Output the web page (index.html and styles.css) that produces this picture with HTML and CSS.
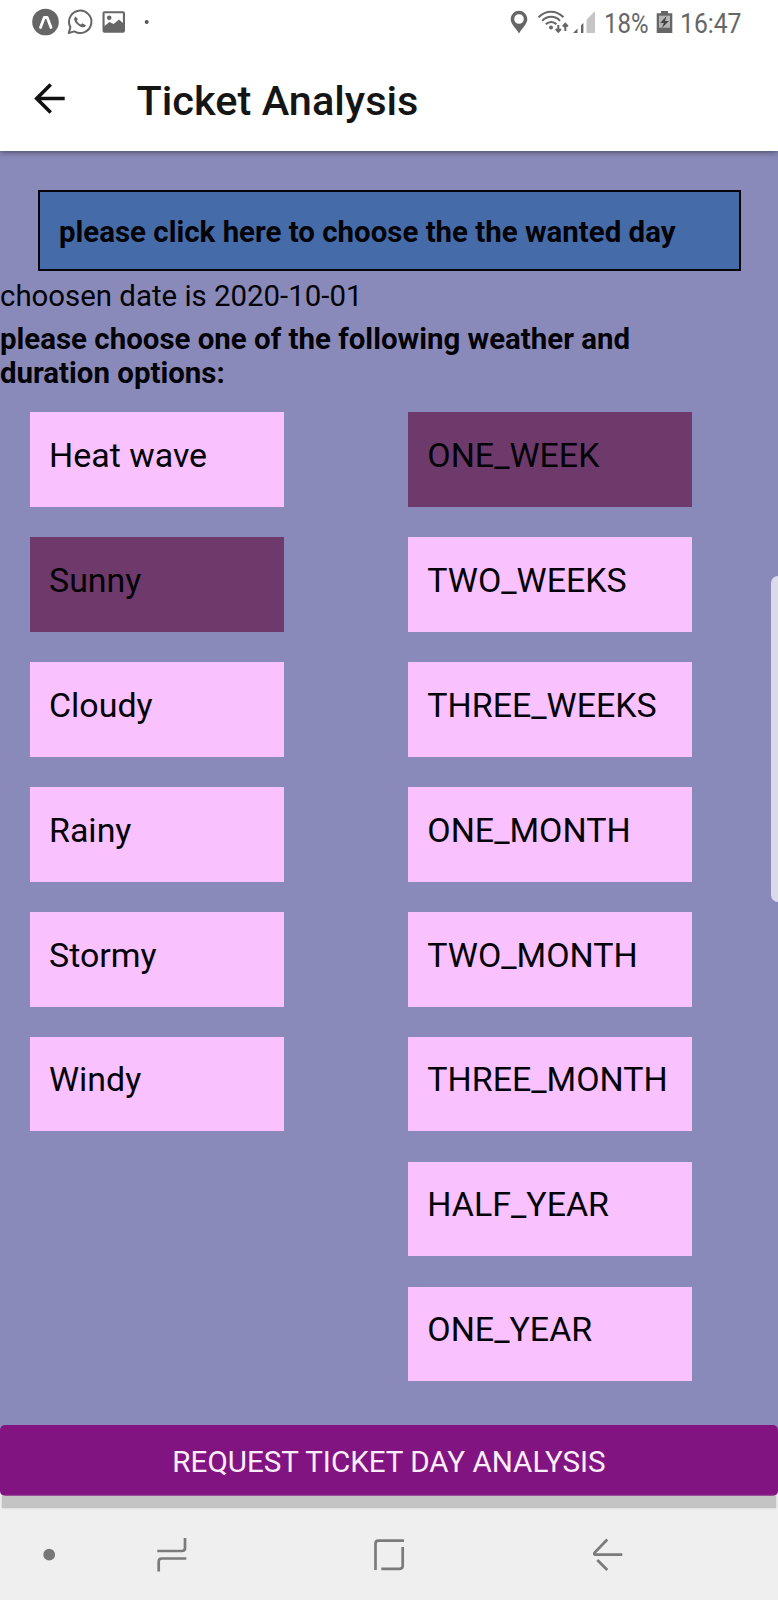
FILE: index.html
```
<!DOCTYPE html>
<html lang="en">
<head>
<meta charset="utf-8">
<title>Ticket Analysis</title>
<link rel="stylesheet" href="styles.css">
</head>
<body>
<div class="phone">
  <header class="header">
    <div class="status">
      <svg class="status-left" width="160" height="48" viewBox="0 0 160 48">
        <circle cx="45.500" cy="22" r="13.300" fill="#666"/>
        <path d="M40.500 27.500L44.300 17.500H47.200L51 27.500" fill="none" stroke="#fff" stroke-width="2.800" stroke-linejoin="round" stroke-linecap="round"/>
        <path d="M68.700 33L70.400 27.200A11.200 11.200 0 1 1 74.400 31.400Z" fill="none" stroke="#666" stroke-width="2" stroke-linejoin="round"/>
        <path d="M75.500 16.500c-3 2.500-.5 6 2.500 8.500s6.500 3.500 8 .5l-3.500-2.300-1.700 1.400c-1.800-.8-3.200-2.200-4-4l1.200-1.500z" fill="#666"/>
        <path d="M104.500 11.200h18.500a2 2 0 0 1 2 2v17.500a2 2 0 0 1-2 2h-18.500a2 2 0 0 1-2-2v-17.500a2 2 0 0 1 2-2z" fill="#666"/>
        <path d="M104.600 13.200h18.300V23l-4-3.500-5.200 4.500-4.300-2-4.800 4z" fill="#fff"/>
        <circle cx="109.200" cy="17.800" r="2.300" fill="#666"/>
        <circle cx="146.700" cy="22" r="2" fill="#555"/>
      </svg>
      <svg class="status-right" width="288" height="48" viewBox="490 0 288 48">
        <path fill-rule="evenodd" d="M519 10.800a8.300 8.300 0 0 0-8.300 8.300c0 5.500 5.300 9.200 8.300 14.300 3-5.100 8.300-8.800 8.300-14.300a8.300 8.300 0 0 0-8.300-8.300zm0 3.400a4.800 4.800 0 1 1 0 9.600 4.800 4.800 0 0 1 0-9.600z" fill="#666"/>
        <g fill="none" stroke="#666" stroke-width="2">
          <path d="M538.500 17.200C546 10 556 10 563.500 17.200M542.200 20.700C547.500 15.500 555 15.500 560 20.700M545.800 24.300C549 21.200 553.500 21.200 556.500 24.300"/>
          <path d="M558.300 25v6.500M555.800 29l2.500 2.800 2.500-2.800M565.300 31v-7M562.800 26.500l2.500-2.800 2.500 2.800"/>
        </g>
        <circle cx="551" cy="27.500" r="2" fill="#666"/>
        <path d="M573 33l4.500-4.500V33zM581 25.300l2.400-2.400V33H581z" fill="#666"/>
        <path d="M586.500 19.800L595 11v22h-8.500z" fill="#c5c5c5"/>
        <text class="status-text" x="604" y="32.700" textLength="44.500" lengthAdjust="spacingAndGlyphs">18%</text>
        <path d="M661 11h7v2.300h4.300V33h-15.600V13.300h4.300z" fill="#666"/>
        <path d="M659 15.700h11v12h-11z" fill="#b5b5b5"/>
        <path d="M666.500 16l-6.300 7h3.600l-1.800 5 6.800-7h-3.800z" fill="#444"/>
        <text class="status-text" x="680" y="32.700" textLength="61.500" lengthAdjust="spacingAndGlyphs">16:47</text>
      </svg>
    </div>
    <div class="appbar">
      <svg class="back" width="32" height="32" viewBox="0 0 32 32"><path d="M30.700 16.500H3M16.700 2.500L2.700 16.500l14 14" fill="none" stroke="#111" stroke-width="3.600"/></svg>
      <h1 class="title">Ticket Analysis</h1>
    </div>
  </header>
  <main class="content">
    <div class="date-button">please click here to choose the the wanted day</div>
    <p class="chosen">choosen date is 2020-10-01</p>
    <p class="prompt">please choose one of the following weather and<br>duration options:</p>
    <div class="options">
      <div class="column weather">
        <div class="option">Heat wave</div>
        <div class="option selected">Sunny</div>
        <div class="option">Cloudy</div>
        <div class="option">Rainy</div>
        <div class="option">Stormy</div>
        <div class="option">Windy</div>
      </div>
      <div class="column duration">
        <div class="option selected">ONE_WEEK</div>
        <div class="option">TWO_WEEKS</div>
        <div class="option">THREE_WEEKS</div>
        <div class="option">ONE_MONTH</div>
        <div class="option">TWO_MONTH</div>
        <div class="option">THREE_MONTH</div>
        <div class="option">HALF_YEAR</div>
        <div class="option">ONE_YEAR</div>
      </div>
    </div>
    <div class="scrollbar"></div>
  </main>
  <footer class="footer">
    <div class="request">REQUEST TICKET DAY ANALYSIS</div>
    <div class="button-shadow"></div>
    <svg class="nav" width="778" height="92" viewBox="0 1508 778 92">
      <circle cx="49.200" cy="1554.700" r="5.900" fill="#777"/>
      <g fill="none" stroke="#7b7b7b" stroke-width="2.700">
        <path d="M157.300 1551H182Q185 1551 185 1548V1538M186.300 1558.500H161.700Q158.700 1558.500 158.700 1561.500V1571.500"/>
        <path d="M375.500 1570V1543.700Q375.500 1540.700 378.500 1540.700H404M402.700 1547V1565.800Q402.700 1568.800 399.700 1568.800H381.300"/>
        <path d="M607.300 1539.500L594.500 1552.800Q593.500 1554.700 595.500 1554.700H622.300M597.300 1560L607.300 1570"/>
      </g>
    </svg>
  </footer>
</div>
</body>
</html>
```
FILE: styles.css
```
* { box-sizing: border-box; }
body { margin: 0; font-family: Roboto, sans-serif; color: #030308; }
p, h1 { margin: 0; }
svg { display: block; }
.phone { width: 778px; height: 1600px; display: flex; flex-direction: column; overflow: hidden; background: #efefef; }
.header { height: 151px; background: #fff; position: relative; z-index: 1; box-shadow: 0 1px 6px rgba(0, 0, 0, .5); }
.status { display: flex; justify-content: space-between; height: 48px; }
.status-text { font: 28px Roboto, sans-serif; fill: #666; }
.appbar { display: flex; align-items: center; height: 103px; padding: 0 0 0 34px; }
.back { margin-top: -3px; }
.title { margin-left: 70.500px; margin-top: 3px; font-size: 41.500px; font-weight: 500; line-height: 50px; color: #151515; white-space: nowrap; }
.content { height: 1274px; background: #8a8aba; padding-top: 38.500px; position: relative; }
.date-button { margin: 0 37.500px 0 38px; height: 81px; border: 2px solid #05050c; background: #466ba9; padding: 23.500px 19px; font-size: 29.450px; line-height: 34.500px; font-weight: 700; white-space: nowrap; }
.chosen { margin-top: 8px; font-size: 29.400px; line-height: 34.500px; white-space: nowrap; }
.prompt { margin-top: 8.500px; font-size: 29.450px; line-height: 34.500px; font-weight: 700; white-space: nowrap; }
.options { display: flex; justify-content: space-between; align-items: flex-start; margin-top: 21.900px; padding: 0 85.700px 0 30px; }
.column { display: flex; flex-direction: column; gap: 30.200px; }
.weather { width: 254px; }
.duration { width: 284px; }
.option { height: 94.700px; padding: 23.700px 19px; background: #f9c1fe; font-size: 33.950px; line-height: 40px; white-space: nowrap; }
.option.selected { background: #6e3a6c; }
.scrollbar { position: absolute; left: 771px; top: 425px; width: 7px; height: 326px; border-radius: 7px 0 0 7px; background: #dcdaea; }
.footer { height: 175px; background: linear-gradient(#8a8aba 10px, #efefef 10px); }
.request { height: 71px; border-radius: 5px; background: #821482; color: #fbeefb; font-size: 29.600px; line-height: 74px; text-align: center; white-space: nowrap; }
.button-shadow { height: 12px; margin: 0 2px; background: #c4c4c4; box-shadow: 0 0 2px #c4c4c4; }
```
